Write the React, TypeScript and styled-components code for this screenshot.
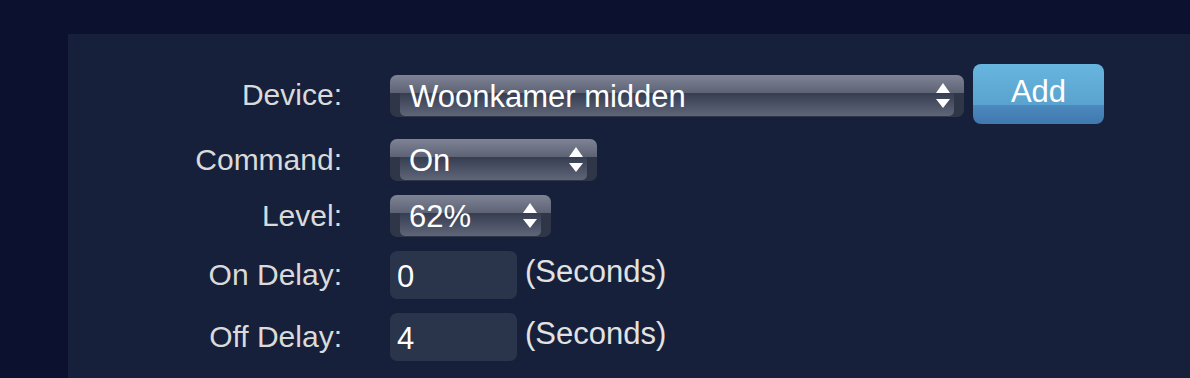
import React from 'react';
import styled, { createGlobalStyle } from 'styled-components';

const GlobalStyle = createGlobalStyle`
  html, body {
    margin: 0;
    padding: 0;
    background: #0d1130;
    font-family: "Liberation Sans", Arial, sans-serif;
  }
`;

const Page = styled.div`
  padding: 34px 0 0 68px;
  height: 378px;
  box-sizing: border-box;
  overflow: hidden;
`;

const Panel = styled.div`
  background: #16203a;
  height: 100%;
  padding-top: 30px;
  box-sizing: border-box;
`;

const Form = styled.div`
  display: grid;
  grid-template-columns: 274px auto;
  column-gap: 48px;
  row-gap: 14px;
  align-items: center;
`;

const Label = styled.div`
  text-align: right;
  color: #dadada;
  font-size: 30px;
`;

const Field = styled.div<{ $gapBelow?: number }>`
  display: flex;
  align-items: center;
  margin-bottom: ${(p) => p.$gapBelow ?? 0}px;
`;

const SelectBox = styled.div<{ $w: number; $shift?: number }>`
  position: relative;
  width: ${(p) => p.$w}px;
  height: 42px;
  margin-top: ${(p) => p.$shift ?? 0}px;
  border-radius: 7px;
  background: #2e3648;
  overflow: hidden;
  display: flex;
  align-items: center;
  justify-content: space-between;
  padding: 0 14px 0 19px;
  box-sizing: border-box;
  color: #fff;
  font-size: 31px;

  &::before {
    content: '';
    position: absolute;
    left: 0;
    right: 0;
    top: 0;
    height: 44%;
    background: linear-gradient(#7e8494, #5d6375);
  }

  &::after {
    content: '';
    position: absolute;
    left: 10px;
    right: 10px;
    top: 44%;
    bottom: 1px;
    border-radius: 0 0 5px 5px;
    background: linear-gradient(#363d51, #5f6679);
  }
`;

const SelectText = styled.span`
  position: relative;
  z-index: 1;
  margin-top: 2px;
`;

const Arrows = styled.svg`
  position: relative;
  z-index: 1;
  flex: none;
`;

const AddButton = styled.button`
  margin-left: 9px;
  width: 131px;
  height: 60px;
  border: none;
  border-radius: 8px;
  background: linear-gradient(#67b6df 0%, #5aa2cf 68%, #4b89bf 69%, #4078af 100%);
  color: #fff;
  font-family: "Liberation Sans", Arial, sans-serif;
  font-size: 31px;
  padding: 0 0 4px;
`;

const TextInput = styled.div`
  width: 127px;
  height: 48px;
  border-radius: 7px;
  background: #2a344b;
  color: #fff;
  font-size: 31px;
  display: flex;
  align-items: center;
  padding: 4px 0 0 7px;
  box-sizing: border-box;
`;

const Unit = styled.span`
  margin-left: 8px;
  margin-top: -6px;
  color: #e2e2e2;
  font-size: 31px;
`;

const UpDown = () => (
  <Arrows width="14" height="26" viewBox="0 0 14 26">
    <polygon points="7,0 14,10 0,10" fill="#fff" />
    <polygon points="0,16 14,16 7,25" fill="#fff" />
  </Arrows>
);

const Select: React.FC<{ width: number; value: string; shift?: number }> = ({ width, value, shift }) => (
  <SelectBox $w={width} $shift={shift}>
    <SelectText>{value}</SelectText>
    <UpDown />
  </SelectBox>
);

const App: React.FC = () => (
  <>
    <GlobalStyle />
    <Page>
      <Panel>
        <Form>
          <Label>Device:</Label>
          <Field $gapBelow={1}>
            <Select width={574} value="Woonkamer midden" shift={4} />
            <AddButton>Add</AddButton>
          </Field>

          <Label>Command:</Label>
          <Field>
            <Select width={207} value="On" />
          </Field>

          <Label>Level:</Label>
          <Field>
            <Select width={161} value="62%" />
          </Field>

          <Label>On Delay:</Label>
          <Field>
            <TextInput>0</TextInput>
            <Unit>(Seconds)</Unit>
          </Field>

          <Label>Off Delay:</Label>
          <Field>
            <TextInput>4</TextInput>
            <Unit>(Seconds)</Unit>
          </Field>
        </Form>
      </Panel>
    </Page>
  </>
);

export default App;
